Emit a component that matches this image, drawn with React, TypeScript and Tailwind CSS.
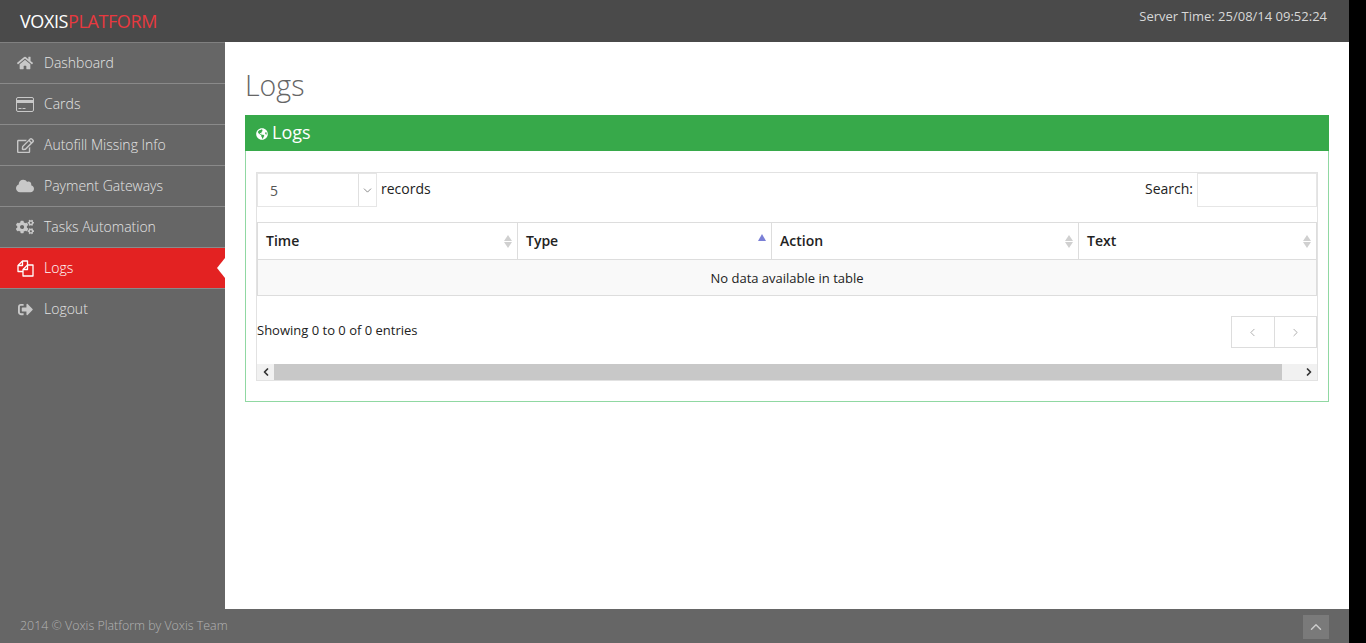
import { FaCloud, FaCogs, FaGlobeAmericas, FaHome, FaRegEdit, FaSignOutAlt } from "react-icons/fa";
import { ChevronDown, ChevronLeft, ChevronRight, ChevronUp } from "lucide-react";

function CardIcon() {
    return (
        <svg width="18" height="15" viewBox="0 0 18 15" fill="none">
            <rect x="0.5" y="0.5" width="17" height="14" rx="1.5" stroke="currentColor" />
            <rect x="1" y="3" width="16" height="3" fill="currentColor" />
            <rect x="2.5" y="11" width="3" height="1" fill="currentColor" />
            <rect x="6.5" y="11" width="3" height="1" fill="currentColor" />
        </svg>
    );
}

function FilesIcon() {
    return (
        <svg width="17" height="17" viewBox="0 0 17 17" fill="none" stroke="currentColor" strokeWidth="1.3" strokeLinejoin="round">
            <path d="M6 11.5H1V5.5L5.5 1H10.5V5" />
            <path d="M1 5.5H5.5V1" />
            <path d="M6 16V9.5L10.5 5H16V16Z" />
            <path d="M6 9.5H10.5V5" />
        </svg>
    );
}

const navItems = [
    { label: "Dashboard", icon: <FaHome size={16} /> },
    { label: "Cards", icon: <CardIcon /> },
    { label: "Autofill Missing Info", icon: <FaRegEdit size={17} /> },
    { label: "Payment Gateways", icon: <FaCloud size={18} /> },
    { label: "Tasks Automation", icon: <FaCogs size={18} /> },
    { label: "Logs", icon: <FilesIcon />, active: true },
    { label: "Logout", icon: <FaSignOutAlt size={15} /> },
];

const columns = [
    { label: "Time", width: "w-[260px]" },
    { label: "Type", width: "w-[254px]", sorted: true },
    { label: "Action", width: "w-[307px]" },
    { label: "Text", width: "flex-1" },
];

function SortArrows({ sorted }: { sorted?: boolean }) {
    if (sorted) {
        return (
            <div className="absolute right-[5px] top-[11px] h-0 w-0 border-x-[4px] border-b-[7px] border-x-transparent border-b-[#7a7fd6]" />
        );
    }
    return (
        <div className="absolute right-[5px] top-[12px] flex flex-col gap-[1px]">
            <div className="h-0 w-0 border-x-[4.5px] border-b-[6px] border-x-transparent border-b-[#d0d0d0]" />
            <div className="h-0 w-0 border-x-[4.5px] border-t-[6px] border-x-transparent border-t-[#d0d0d0]" />
        </div>
    );
}

function Sidebar() {
    return (
        <div className="w-[225px] shrink-0 bg-[#666666] border-t border-[#808080]">
            {navItems.map((item) => (
                <div
                    key={item.label}
                    className={
                        item.active
                            ? "relative flex h-[41px] items-center bg-[#e32222] text-white border-b border-[#8a8a8a]"
                            : item.label === "Logout"
                              ? "relative flex h-[41px] items-center text-[#e4e4e4]"
                              : "relative flex h-[41px] items-center text-[#e4e4e4] border-b border-[#8a8a8a]"
                    }
                >
                    <div
                        className={
                            item.active
                                ? "flex w-[44px] justify-center pl-[6px] text-white"
                                : "flex w-[44px] justify-center pl-[6px] text-[#c8c8c8]"
                        }
                    >
                        {item.icon}
                    </div>
                    <span className="text-[14px] font-light pb-[2px]">{item.label}</span>
                    {item.active && (
                        <div className="absolute right-0 top-[10px] h-0 w-0 border-y-[10px] border-r-[8px] border-y-transparent border-r-white" />
                    )}
                </div>
            ))}
        </div>
    );
}

function LogsPanel() {
    return (
        <div className="border border-[#90d8a2] h-[287px]">
            <div className="flex h-[36px] items-center gap-[4px] bg-[#37a94a] pl-[11px] text-white -mx-px -mt-px">
                <FaGlobeAmericas size={12} className="mt-[2px]" />
                <span className="text-[18px] leading-none pb-[2px]">Logs</span>
            </div>
            <div className="mx-[10px] mt-[21px] h-[209px] border border-[#e2e2e2] bg-white">
                <div className="flex h-[34px] items-center justify-between">
                    <div className="flex items-center">
                        <div className="flex h-[34px] w-[120px] items-center border border-[#e6e6e6]">
                            <span className="flex-1 pl-[12px] text-[14px] text-[#555555]">5</span>
                            <div className="flex h-full w-[18px] items-center justify-center border-l border-[#e0e0e0]">
                                <ChevronDown size={13} strokeWidth={1.25} className="text-[#555555]" />
                            </div>
                        </div>
                        <span className="ml-[4px] text-[14px] leading-none text-[#222222] -mt-[3px]">records</span>
                    </div>
                    <div className="flex items-center">
                        <span className="mr-[4px] text-[14px] text-[#222222] -mt-[3px]">Search:</span>
                        <div className="h-[34px] w-[120px] border border-[#e6e6e6]" />
                    </div>
                </div>
                <div className="mt-[15px] border border-[#dddddd]">
                    <div className="flex h-[37px] border-b border-[#dddddd]">
                        {columns.map((col, index) => (
                            <div
                                key={col.label}
                                className={
                                    index < 3
                                        ? `relative flex items-center border-r border-[#dddddd] pl-[8px] pb-[2px] ${col.width}`
                                        : `relative flex items-center pl-[8px] pb-[2px] ${col.width}`
                                }
                            >
                                <span className="text-[14px] font-semibold text-[#222222]">{col.label}</span>
                                <SortArrows sorted={col.sorted} />
                            </div>
                        ))}
                    </div>
                    <div className="flex h-[35px] items-center justify-center bg-[#f9f9f9] pt-[2px] text-[13px] text-[#222222]">
                        No data available in table
                    </div>
                </div>
                <div className="flex justify-between pt-[20px]">
                    <span className="text-[13px] leading-[28px] text-[#222222]">Showing 0 to 0 of 0 entries</span>
                    <div className="flex h-[32px] w-[86px] border border-[#dddddd]">
                        <div className="flex flex-1 items-center justify-center border-r border-[#dddddd] text-[#888888]">
                            <ChevronLeft size={13} strokeWidth={1.25} />
                        </div>
                        <div className="flex flex-1 items-center justify-center text-[#888888]">
                            <ChevronRight size={13} strokeWidth={1.25} />
                        </div>
                    </div>
                </div>
                <div className="mt-[16px] flex h-[16px] bg-[#f1f1f1]">
                    <div className="flex w-[17px] items-center justify-center text-[#333333]">
                        <ChevronLeft size={12} strokeWidth={3.5} />
                    </div>
                    <div className="flex-1 bg-[#c8c8c8]" />
                    <div className="flex w-[35px] items-center justify-end pr-[2px] text-[#333333]">
                        <ChevronRight size={12} strokeWidth={3.5} />
                    </div>
                </div>
            </div>
        </div>
    );
}

export default function App() {
    return (
        <div className="flex h-[643px] overflow-hidden bg-black font-['Open_Sans',sans-serif]">
            <div className="flex w-[1349px] flex-col bg-white">
                <header className="flex h-[42px] items-center justify-between bg-[#4a4a4a] pl-[20px] pr-[22px]">
                    <div className="text-[18px] tracking-[-0.4px]">
                        <span className="text-white">VOXIS</span>
                        <span className="text-[#e8393f]">PLATFORM</span>
                    </div>
                    <span className="text-[13px] text-[#d8d8d8] -mt-[8px]">Server Time: 25/08/14 09:52:24</span>
                </header>
                <div className="flex flex-1">
                    <Sidebar />
                    <main className="flex-1 pl-[20px] pr-[20px]">
                        <h1 className="mt-[24px] h-[49px] text-[28.5px] font-light leading-[38px] text-[#666666]">Logs</h1>
                        <LogsPanel />
                    </main>
                </div>
                <footer className="flex h-[34px] items-center justify-between bg-[#666666] pl-[20px] pr-[20px]">
                    <span className="text-[12.4px] font-light text-[#b4b4b4]">2014 © Voxis Platform by Voxis Team</span>
                    <div className="flex h-[24px] w-[26px] items-center justify-center bg-[#7a7a7a] text-[#cccccc] mt-[1px]">
                        <ChevronUp size={18} strokeWidth={2} />
                    </div>
                </footer>
            </div>
        </div>
    );
}
